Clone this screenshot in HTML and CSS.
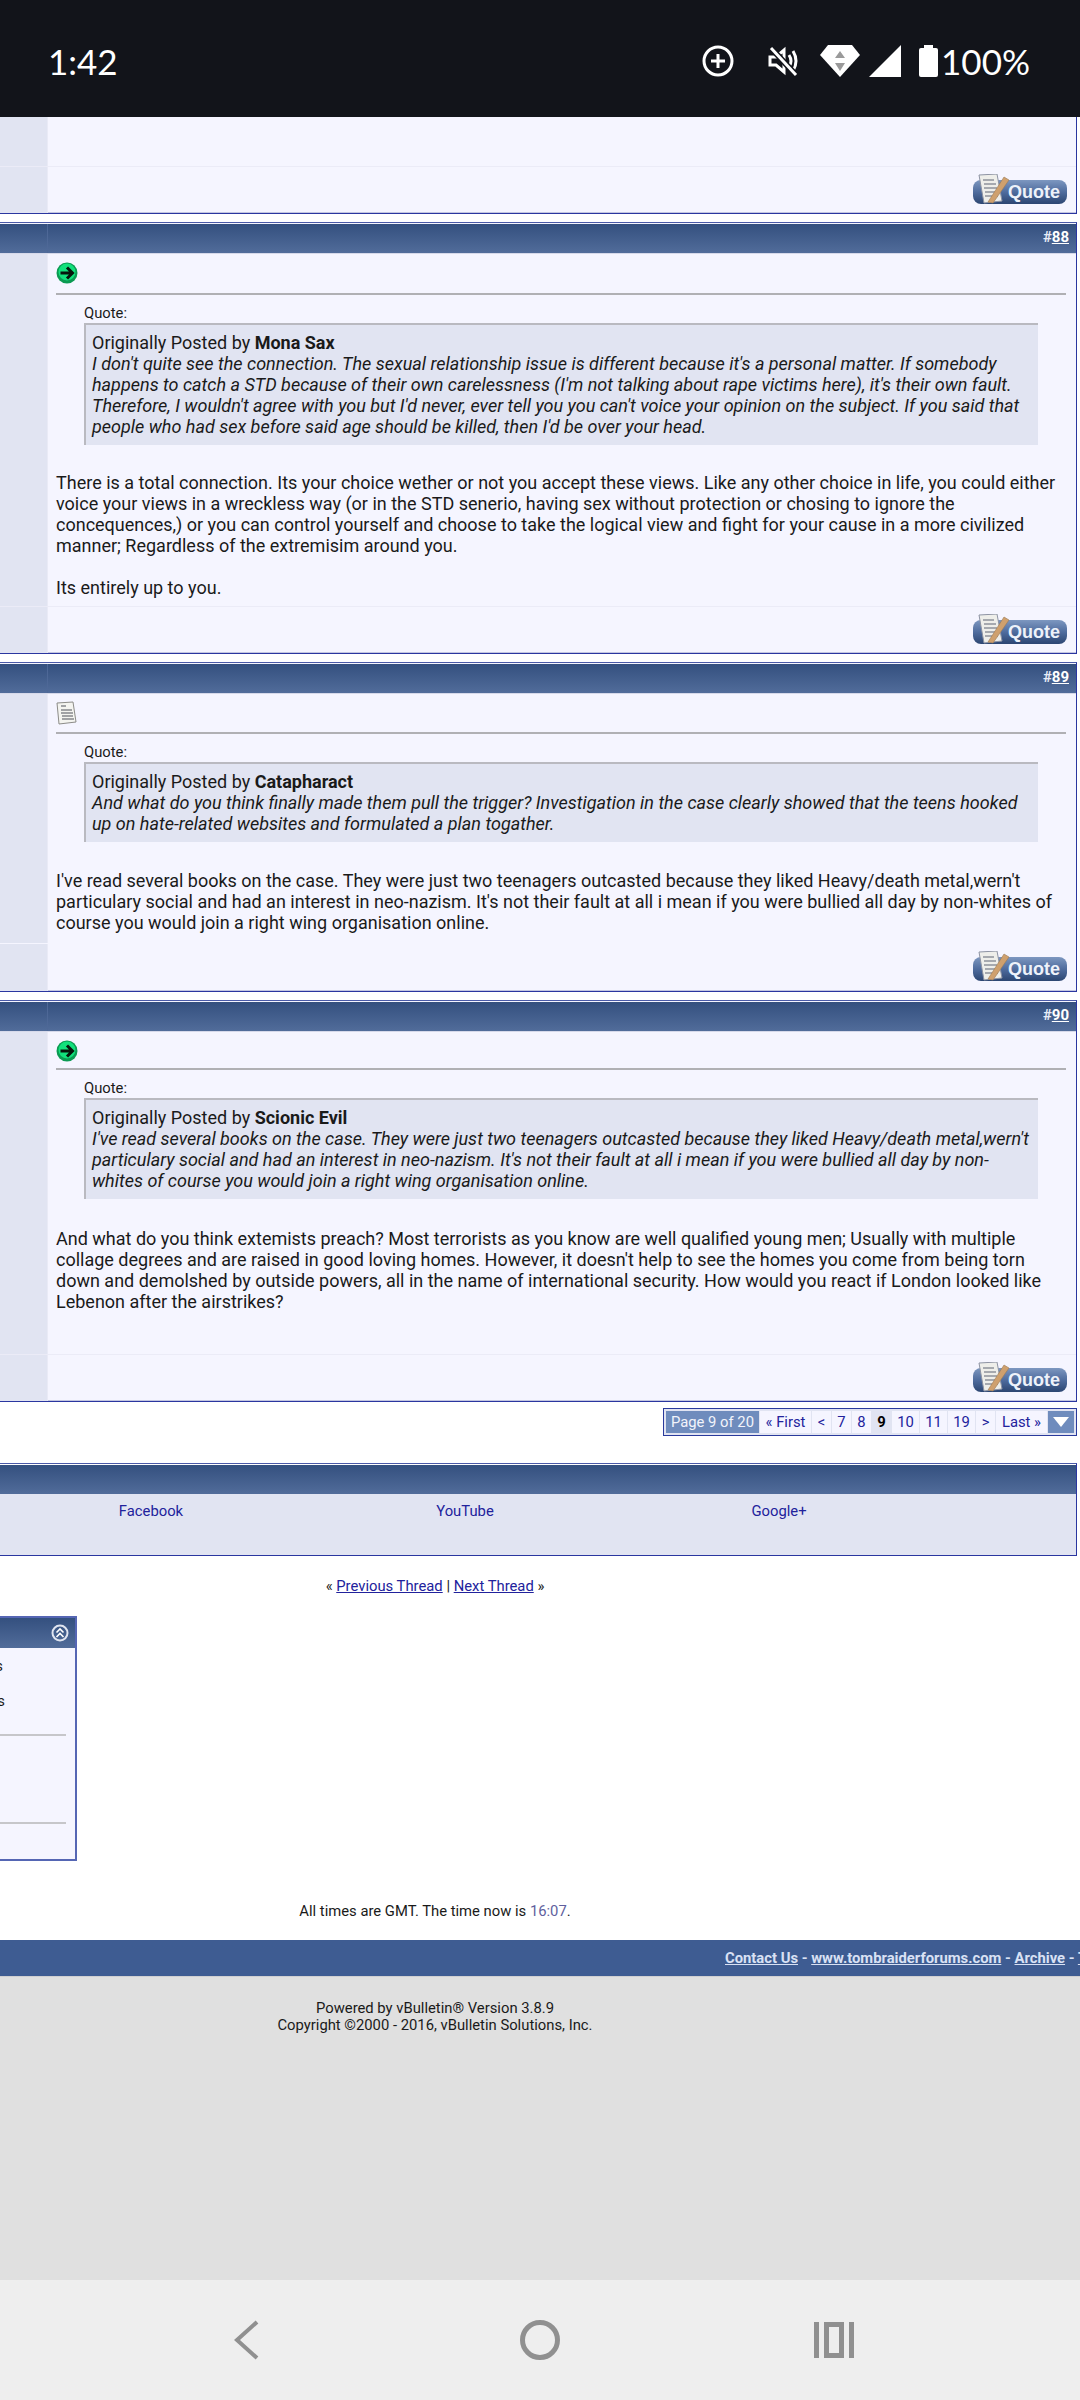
FILE: index.html
```html
<!DOCTYPE html>
<html lang="en">
<head>
    <meta charset="UTF-8">
    <meta name="viewport" content="width=device-width, initial-scale=1.0">
    <title>Tomb Raider Forums</title>
    <link rel="stylesheet" href="styles.css">
</head>
<body>
    <svg class="defs" width="0" height="0">
        <defs>
            <linearGradient id="pill" x1="0" y1="0" x2="0" y2="1">
                <stop offset="0" stop-color="#7d97c0"/>
                <stop offset="0.5" stop-color="#4f6c9e"/>
                <stop offset="1" stop-color="#2c4672"/>
            </linearGradient>
            <symbol id="quote-btn" viewBox="0 0 94 30">
                <rect x="0" y="6" width="94" height="24" rx="8" fill="url(#pill)"/>
                <path d="M6 1 L24 0 L29 27 L11 29 Z" fill="#eeeeea" stroke="#8d93a3"/>
                <path d="M10 6 H21 M11 10 H23 M11 14 H24 M12 18 H25 M12 22 H25" stroke="#8f939c" stroke-width="1.6"/>
                <path d="M15 28 L31 3 L36 6 L20 29 Z" fill="#cfa06d" stroke="#9c7b55" stroke-width="0.6"/>
                <text x="61" y="24" text-anchor="middle" class="btn-text">Quote</text>
            </symbol>
            <symbol id="arrow-icon" viewBox="0 0 22 22">
                <circle cx="11" cy="11" r="10.5" fill="#0b9a52"/>
                <circle cx="11" cy="10" r="8.5" fill="#12e07c"/>
                <path d="M4.5 11 H15 M11 5.5 L16.5 11 L11 16.5" fill="none" stroke="#06160c" stroke-width="3"/>
            </symbol>
            <symbol id="paper-icon" viewBox="0 0 22 24">
                <path d="M1 2 L17 1 L20 21 L3 23 Z" fill="#f4f4f0" stroke="#8c8c88"/>
                <path d="M5 5 H10 M5 9 H16 M5 12 H17 M6 15 H17 M6 18 H18" stroke="#85878c" stroke-width="1.3"/>
            </symbol>
        </defs>
    </svg>

    <div class="status-bar">
        <span class="clock">1:42</span>
        <div class="status-icons">
            <svg class="ic-add" width="32" height="32" viewBox="0 0 32 32"><circle cx="16" cy="16" r="14" fill="none" stroke="#fff" stroke-width="3"/><path d="M16 9 V23 M9 16 H23" stroke="#fff" stroke-width="3"/></svg>
            <svg class="ic-mute" width="32" height="32" viewBox="0 0 32 32"><path d="M3 12 H9 L17 5 V27 L9 20 H3 Z" fill="none" stroke="#fff" stroke-width="3"/><path d="M22 10 Q26 16 22 22 M26 6 Q32 16 26 26" fill="none" stroke="#fff" stroke-width="3"/><path d="M4 3 L29 30" stroke="#12141a" stroke-width="6"/><path d="M4 3 L29 30" stroke="#fff" stroke-width="3"/></svg>
            <svg class="ic-wifi" width="40" height="32" viewBox="0 0 40 32"><path d="M8 0 H32 L40 10 L20 32 L0 10 Z" fill="#fff"/><path d="M20 6 L25 13 H15 Z M20 26 L25 18 H15 Z" fill="#9a9a9a"/></svg>
            <svg class="ic-signal" width="32" height="32" viewBox="0 0 32 32"><path d="M32 0 V32 H0 Z" fill="#fff"/></svg>
            <svg class="ic-batt" width="19" height="32" viewBox="0 0 19 32"><path d="M5 0 H14 V3 H17 Q19 3 19 5 V30 Q19 32 17 32 H2 Q0 32 0 30 V5 Q0 3 2 3 H5 Z" fill="#fff"/></svg>
            <span class="batt-text">100%</span>
        </div>
    </div>

    <div class="page">
        <div class="post post-first">
            <div class="post-row"><div class="side"></div><div class="main main-first"></div></div>
            <div class="post-row foot"><div class="side"></div><div class="main foot-main"><svg class="quote-btn"><use href="#quote-btn"/></svg></div></div>
        </div>

        <div class="post">
            <div class="post-head"><div class="side-head"></div><div class="head-main">#<a href="#">88</a></div></div>
            <div class="post-row">
                <div class="side"></div>
                <div class="main body-88">
                    <div class="title-row"><svg class="post-icon"><use href="#arrow-icon"/></svg></div>
                    <div class="sep"></div>
                    <div class="quote-label">Quote:</div>
                    <div class="quote-box">
                        Originally Posted by <b>Mona Sax</b><br>
                        <i>I don't quite see the connection. The sexual relationship issue is different because it's a personal matter. If somebody<br>
                        happens to catch a STD because of their own carelessness (I'm not talking about rape victims here), it's their own fault.<br>
                        Therefore, I wouldn't agree with you but I'd never, ever tell you you can't voice your opinion on the subject. If you said that<br>
                        people who had sex before said age should be killed, then I'd be over your head.</i>
                    </div>
                    <div class="message">
                        There is a total connection. Its your choice wether or not you accept these views. Like any other choice in life, you could either<br>
                        voice your views in a wreckless way (or in the STD senerio, having sex without protection or chosing to ignore the<br>
                        concequences,) or you can control yourself and choose to take the logical view and fight for your cause in a more civilized<br>
                        manner; Regardless of the extremisim around you.<br><br>
                        Its entirely up to you.
                    </div>
                </div>
            </div>
            <div class="post-row foot"><div class="side"></div><div class="main foot-main"><svg class="quote-btn"><use href="#quote-btn"/></svg></div></div>
        </div>

        <div class="post">
            <div class="post-head"><div class="side-head"></div><div class="head-main">#<a href="#">89</a></div></div>
            <div class="post-row">
                <div class="side"></div>
                <div class="main body-89">
                    <div class="title-row"><svg class="post-icon"><use href="#paper-icon"/></svg></div>
                    <div class="sep"></div>
                    <div class="quote-label">Quote:</div>
                    <div class="quote-box">
                        Originally Posted by <b>Catapharact</b><br>
                        <i>And what do you think finally made them pull the trigger? Investigation in the case clearly showed that the teens hooked<br>
                        up on hate-related websites and formulated a plan togather.</i>
                    </div>
                    <div class="message">
                        I've read several books on the case. They were just two teenagers outcasted because they liked Heavy/death metal,wern't<br>
                        particulary social and had an interest in neo-nazism. It's not their fault at all i mean if you were bullied all day by non-whites of<br>
                        course you would join a right wing organisation online.
                    </div>
                </div>
            </div>
            <div class="post-row foot foot-plain"><div class="side"></div><div class="main foot-main"><svg class="quote-btn"><use href="#quote-btn"/></svg></div></div>
        </div>

        <div class="post">
            <div class="post-head"><div class="side-head"></div><div class="head-main">#<a href="#">90</a></div></div>
            <div class="post-row">
                <div class="side"></div>
                <div class="main body-90">
                    <div class="title-row"><svg class="post-icon"><use href="#arrow-icon"/></svg></div>
                    <div class="sep"></div>
                    <div class="quote-label">Quote:</div>
                    <div class="quote-box">
                        Originally Posted by <b>Scionic Evil</b><br>
                        <i>I've read several books on the case. They were just two teenagers outcasted because they liked Heavy/death metal,wern't<br>
                        particulary social and had an interest in neo-nazism. It's not their fault at all i mean if you were bullied all day by non-<br>
                        whites of course you would join a right wing organisation online.</i>
                    </div>
                    <div class="message">
                        And what do you think extemists preach? Most terrorists as you know are well qualified young men; Usually with multiple<br>
                        collage degrees and are raised in good loving homes. However, it doesn't help to see the homes you come from being torn<br>
                        down and demolshed by outside powers, all in the name of international security. How would you react if London looked like<br>
                        Lebenon after the airstrikes?
                    </div>
                </div>
            </div>
            <div class="post-row foot"><div class="side"></div><div class="main foot-main"><svg class="quote-btn"><use href="#quote-btn"/></svg></div></div>
        </div>

        <div class="pagenav-wrap">
            <div class="pagenav">
                <span class="pn pn-label">Page 9 of 20</span>
                <a class="pn pn-first" href="#">« First</a>
                <a class="pn pn-sm" href="#">&lt;</a>
                <a class="pn pn-sm" href="#">7</a>
                <a class="pn pn-sm" href="#">8</a>
                <span class="pn pn-sm pn-cur">9</span>
                <a class="pn pn-md" href="#">10</a>
                <a class="pn pn-md" href="#">11</a>
                <a class="pn pn-md" href="#">19</a>
                <a class="pn pn-sm" href="#">&gt;</a>
                <a class="pn pn-first" href="#">Last »</a>
                <span class="pn pn-menu"><svg width="16" height="10" viewBox="0 0 16 10"><path d="M0 0 H16 L8 10 Z" fill="#fff"/></svg></span>
            </div>
        </div>

        <div class="social">
            <div class="social-head"></div>
            <div class="social-body">
                <a href="#">Facebook</a>
                <a href="#">YouTube</a>
                <a href="#">Google+</a>
            </div>
        </div>

        <div class="center-col thread-links">« <a href="#">Previous Thread</a> | <a href="#">Next Thread</a> »</div>

        <div class="perm-box">
            <div class="perm-head">
                <svg width="18" height="18" viewBox="0 0 18 18"><circle cx="9" cy="9" r="7.5" fill="none" stroke="#dfe4f0" stroke-width="2"/><path d="M5.5 8.5 L9 5 L12.5 8.5 M5.5 13 L9 9.5 L12.5 13" fill="none" stroke="#fff" stroke-width="1.6"/></svg>
            </div>
            <div class="perm-body">
                <div class="perm-line perm-a">You may not post new threads</div>
                <div class="perm-line perm-b">You may not post replies</div>
                <div class="perm-sep perm-sep-a"></div>
                <div class="perm-sep perm-sep-b"></div>
            </div>
        </div>

        <div class="center-col times">All times are GMT. The time now is <span class="time-now">16:07</span>.</div>
    </div>

    <div class="footer-band">
        <a href="#">Contact Us</a> - <a href="#">www.tombraiderforums.com</a> - <a href="#">Archive</a> - <a href="#">Top</a>
    </div>

    <div class="copyright">
        <div class="center-col">Powered by vBulletin® Version 3.8.9<br>Copyright ©2000 - 2016, vBulletin Solutions, Inc.</div>
    </div>

    <div class="nav-bar">
        <svg class="nav-back" width="26" height="40" viewBox="0 0 26 40"><path d="M24 2 L4 20 L24 38" fill="none" stroke="#909090" stroke-width="4"/></svg>
        <svg class="nav-home" width="40" height="40" viewBox="0 0 40 40"><circle cx="20" cy="20" r="17.5" fill="none" stroke="#909090" stroke-width="5"/></svg>
        <svg class="nav-recent" width="40" height="36" viewBox="0 0 40 36"><path d="M0 0 H5 V36 H0 Z M35 0 H40 V36 H35 Z" fill="#909090"/><rect x="12.5" y="2.5" width="15" height="31" fill="none" stroke="#909090" stroke-width="5"/></svg>
    </div>
</body>
</html>
```

FILE: styles.css
```css
body {
    margin: 0;
    width: 1080px;
    height: 2400px;
    overflow: hidden;
    background: #fff;
    font-family: 'Roboto', sans-serif;
    color: #1a1a1a;
    display: flex;
    flex-direction: column;
}

a {
    color: #22229c;
}

.defs {
    position: absolute;
}

.btn-text {
    font-family: 'Liberation Sans', sans-serif;
    font-weight: bold;
    font-size: 18px;
    fill: #eef2fa;
}

/* Status bar */
.status-bar {
    height: 117px;
    flex: none;
    background: #12141a;
    display: flex;
    justify-content: space-between;
    align-items: center;
    padding: 4px 50px 0 48px;
    color: #fff;
    box-sizing: border-box;
}

.clock {
    font-family: 'Lato', sans-serif;
    font-size: 35px;
}

.status-icons {
    display: flex;
    align-items: center;
}

.status-icons svg {
    display: block;
}

.ic-mute {
    margin-left: 33px;
}

.ic-wifi {
    margin-left: 21px;
}

.ic-signal {
    margin-left: 9px;
}

.ic-batt {
    margin-left: 18px;
}

.batt-text {
    font-family: 'Lato', sans-serif;
    font-size: 35px;
    margin-left: 3px;
}

/* Posts */
.page {
    flex: none;
    height: 1823px;
    width: 1077px;
    font-size: 18px;
    line-height: 21px;
}

.post {
    background: #f5f5ff;
    border: 1px solid #4a5aa8;
    border-left: 0;
    border-right-color: #2a36a0;
    border-bottom-color: #2a36a0;
    box-shadow: inset 0 -1px 0 #c3c6e0;
    margin-bottom: 8px;
}

.post-first {
    border-top: 0;
}

.post-row {
    display: flex;
}

.side {
    width: 47px;
    flex: none;
    background: #e1e4f2;
    border-right: 1px solid #e9eaf6;
}

.main {
    flex: 1;
    min-width: 0;
    box-sizing: border-box;
    padding: 0 10px 0 8px;
}

.main-first {
    height: 49px;
}

.foot {
    border-top: 1px solid #ebebf7;
}

.foot-plain {
    border-top-color: transparent;
}

.foot-main {
    height: 46px;
    display: flex;
    justify-content: flex-end;
    padding: 7px 9px 0 8px;
}

.foot-plain .foot-main {
    height: 47px;
}

.quote-btn {
    width: 94px;
    height: 30px;
    display: block;
}

.post-head {
    display: flex;
    height: 29px;
    margin-top: 1px;
    background: linear-gradient(to bottom, #34507f, #516c9a);
    border-bottom: 1px solid #d6d9ea;
}

.side-head {
    width: 47px;
    border-right: 1px solid #4e6897;
}

.head-main {
    flex: 1;
    text-align: right;
    padding-right: 7px;
    color: #e6ebf7;
    font-size: 15px;
    font-weight: bold;
    line-height: 27px;
}

.head-main a {
    color: #fff;
}

.body-88 {
    height: 352px;
}

.body-89 {
    height: 249px;
}

.body-89 .title-row {
    height: 38px;
}

.body-89 .message {
    margin-top: 28px;
}

.body-90 {
    height: 322px;
}

.body-90 .title-row {
    height: 36px;
}

.body-90 .quote-box {
    padding-bottom: 8px;
}

.body-90 .message {
    margin-top: 29px;
}

.title-row {
    height: 39px;
    padding-top: 7px;
    box-sizing: border-box;
}

.post-icon {
    width: 22px;
    height: 24px;
    display: block;
}

.sep {
    height: 2px;
    background: #b0b0b4;
}

.quote-label {
    margin: 9px 0 0 28px;
    font-size: 14.8px;
    line-height: 19px;
}

.quote-box {
    margin: 0 28px 0 28px;
    padding: 7px 6px 8px;
    background: #e1e4f2;
    border-top: 2px solid #b9b9c0;
    border-left: 2px solid #b9b9c0;
    white-space: nowrap;
}

.message {
    margin-top: 27px;
    white-space: nowrap;
}

/* Page nav */
.pagenav-wrap {
    display: flex;
    justify-content: flex-end;
    margin-top: -2px;
}

.pagenav {
    display: flex;
    gap: 1px;
    height: 22px;
    padding: 2px;
    border: 1px solid #2a3a9c;
    background: #e1e4f2;
    font-size: 14.8px;
    line-height: 22px;
}

.pn {
    display: block;
    text-align: center;
    background: #f5f5ff;
    color: #22229c;
    text-decoration: none;
}

.pn-label {
    width: 93px;
    background: #6f8cbd;
    color: #f2f4fb;
}

.pn-first {
    width: 51px;
}

.pn-sm {
    width: 19px;
}

.pn-md {
    width: 27px;
}

.pn-cur {
    background: #e1e4f2;
    color: #000;
    font-weight: bold;
}

.pn-menu {
    width: 26px;
    background: #6f8cbd;
    display: flex;
    align-items: center;
    justify-content: center;
}

/* Social links table */
.social {
    margin-top: 27px;
    border: 1px solid #4a5aa8;
    border-left: 0;
    border-right-color: #2a36a0;
    border-bottom-color: #2a36a0;
}

.social-head {
    height: 29px;
    margin-top: 1px;
    background: linear-gradient(to bottom, #34507f, #516c9a);
}

.social-body {
    height: 61px;
    background: #e1e4f2;
    display: grid;
    grid-template-columns: repeat(3, 314px);
    margin-left: -6px;
    font-size: 14.8px;
    line-height: 35px;
    text-align: center;
}

.social-body a {
    text-decoration: none;
}

.center-col {
    width: 870px;
    text-align: center;
    font-size: 14.8px;
    line-height: 17px;
}

.thread-links {
    margin-top: 22px;
}

/* Forum rules box, scrolled mostly out of view */
.perm-box {
    width: 75px;
    margin-top: 21px;
    height: 241px;
    border: 2px solid #5566b4;
    border-left: 0;
    background: #f5f5ff;
    overflow: hidden;
}

.perm-head {
    height: 30px;
    background: linear-gradient(to bottom, #34507f, #516c9a);
    display: flex;
    justify-content: flex-end;
    align-items: center;
    padding-right: 6px;
}

.perm-body {
    font-size: 14.8px;
    line-height: 17px;
}

.perm-line {
    width: 283px;
    margin-left: -280px;
    text-align: right;
    white-space: nowrap;
}

.perm-a {
    margin-top: 10px;
}

.perm-b {
    width: 285px;
    margin-top: 18px;
}

.perm-sep {
    width: 66px;
    height: 2px;
    background: #c6c6ca;
}

.perm-sep-a {
    margin-top: 24px;
}

.perm-sep-b {
    margin-top: 86px;
}

.times {
    margin-top: 42px;
}

.time-now {
    color: #5f5f9e;
}

/* Footer */
.footer-band {
    flex: none;
    height: 37px;
    box-sizing: border-box;
    background: #3e5c92;
    border-bottom: 1px solid #cfcfd2;
    padding-left: 725px;
    white-space: nowrap;
    overflow: hidden;
    color: #d9e1f4;
    font-size: 14.8px;
    font-weight: bold;
    line-height: 37px;
}

.footer-band a {
    color: #d9e1f4;
}

.copyright {
    flex: 1;
    background: #e0e0e0;
    padding-top: 23px;
}

.nav-bar {
    flex: none;
    height: 120px;
    background: #eeeeee;
    display: flex;
    align-items: center;
    padding-left: 233px;
}

.nav-home {
    margin-left: 261px;
}

.nav-recent {
    margin-left: 254px;
}
```
